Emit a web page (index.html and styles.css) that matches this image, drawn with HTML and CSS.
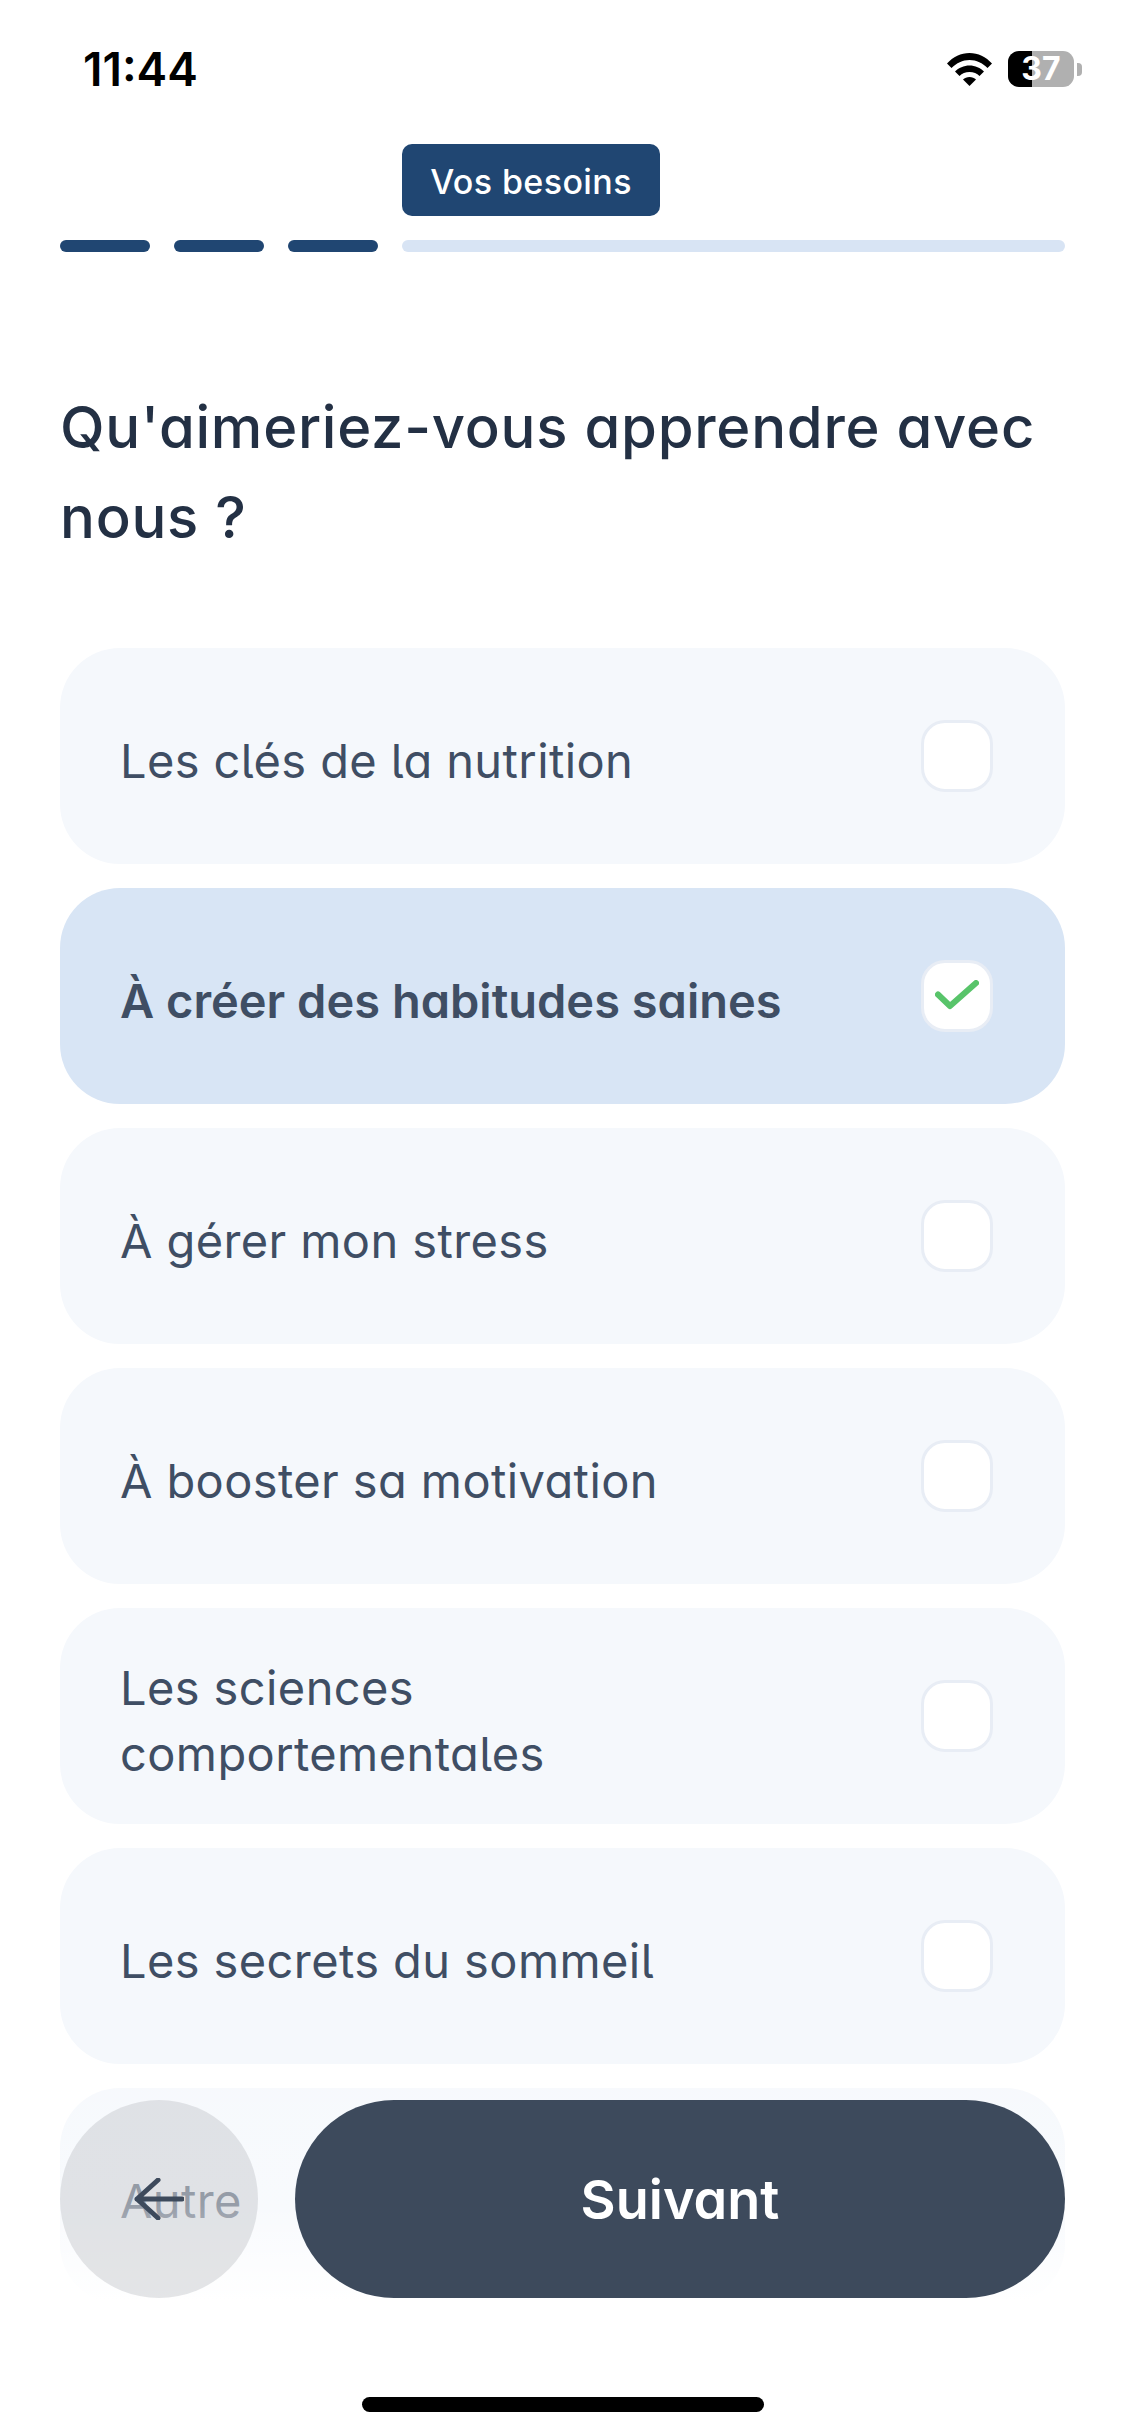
FILE: index.html
```html
<!DOCTYPE html>
<html lang="fr">
<head>
<meta charset="utf-8">
<title>Vos besoins</title>
<link rel="stylesheet" href="styles.css">
</head>
<body>
<main class="screen">
  <header class="status">
    <span class="time">11:44</span>
    <div class="status-icons">
      <svg class="wifi" viewBox="0 0 45 33" aria-hidden="true">
        <path d="M0 10.500C6 4 14 0 22.500 0S39 4 45 10.500L40.500 15C35.500 10 29.500 7 22.500 7S9.500 10 4.500 15Z"/>
        <path d="M8 18.500C11.500 15 17 12.500 22.500 12.500S33.500 15 37 18.500L32.500 23C30 20.500 26.500 19 22.500 19S15 20.500 12.500 23Z"/>
        <path d="M16 26.500C17.500 25 20 24 22.500 24S27.500 25 29 26.500L22.500 33Z"/>
      </svg>
      <div class="battery">
        <div class="battery-body"><div class="battery-fill"></div><span class="battery-num">37</span></div>
        <div class="battery-nub"></div>
      </div>
    </div>
  </header>

  <section class="progress">
    <div class="tag-row"><span class="tag">Vos besoins</span></div>
    <div class="bars">
      <span class="bar done"></span>
      <span class="bar done"></span>
      <span class="bar done"></span>
      <span class="bar rest"></span>
    </div>
  </section>

  <h1 class="question">Qu'aimeriez-vous apprendre avec nous ?</h1>

  <ul class="options">
    <li class="option"><span class="label">Les clés de la nutrition</span><span class="box"></span></li>
    <li class="option selected"><span class="label">À créer des habitudes saines</span>
      <span class="box"><svg class="check" viewBox="0 0 44 32" aria-hidden="true"><path d="M3 14.500 15 26 41 3"/></svg></span></li>
    <li class="option"><span class="label">À gérer mon stress</span><span class="box"></span></li>
    <li class="option"><span class="label">À booster sa motivation</span><span class="box"></span></li>
    <li class="option"><span class="label narrow">Les sciences comportementales</span><span class="box"></span></li>
    <li class="option"><span class="label">Les secrets du sommeil</span><span class="box"></span></li>
    <li class="option"><span class="label">Autre</span><span class="box"></span></li>
  </ul>

  <div class="fade"></div>
  <nav class="actions">
    <button class="back" aria-label="Retour">
      <svg viewBox="0 0 50 42" aria-hidden="true"><path d="M48 21H3M24 2 3 21 24 40"/></svg>
    </button>
    <button class="next">Suivant</button>
  </nav>
  <div class="home"></div>
</main>
</body>
</html>
```
FILE: styles.css
```css
* { box-sizing: border-box; margin: 0; padding: 0; }
html, body { background: #fff; }
body { width: 1125px; height: 2436px; overflow: hidden; font-family: "Inter", "Liberation Sans", sans-serif; font-feature-settings: "cv05", "cv11"; }
.screen { position: relative; width: 1125px; height: 2436px; overflow: hidden; padding: 0 60px; }

.status { height: 144px; display: flex; justify-content: space-between; align-items: flex-start; margin: 0 -17px 0 23px; padding-top: 43px; }
.time { font: 600 46px/52px "Inter", sans-serif; color: #000; }
.status-icons { display: flex; align-items: center; gap: 16px; padding-top: 8px; }
.wifi { width: 45px; height: 33px; fill: #000; display: block; }
.battery { display: flex; align-items: center; gap: 3px; }
.battery-body { position: relative; width: 66px; height: 36px; border-radius: 11px; background: #b0b0b0; display: flex; align-items: center; justify-content: center; }
.battery-fill { position: absolute; left: 0; top: 0; bottom: 0; width: 24px; border-radius: 11px 0 0 11px; background: #000; }
.battery-num { position: relative; font: 700 32px/36px "Inter", sans-serif; color: #fff; }
.battery-nub { width: 5px; height: 13px; background: #b0b0b0; border-radius: 0 4px 4px 0; }

.tag-row { padding-left: 342px; height: 96px; }
.tag { display: inline-flex; align-items: center; justify-content: center; height: 72px; width: 258px; padding-top: 2px; background: #204672; color: #fff; border-radius: 10px; font-size: 34px; font-weight: 500; letter-spacing: 0.4px; white-space: nowrap; }
.bars { display: flex; gap: 24px; }
.bar { height: 12px; border-radius: 6px; }
.done { width: 90px; background: #204672; }
.rest { flex: 1; background: #d8e4f4; }

.question { margin-top: 128px; padding-top: 2px; height: 182px; font-size: 58px; line-height: 90px; font-weight: 500; letter-spacing: 0.75px; color: #233044; }

.options { list-style: none; margin-top: 86px; display: flex; flex-direction: column; gap: 24px; }
.option { flex: none; height: 216px; border-radius: 60px; background: #f5f8fc; padding: 0 72px 0 60px; display: flex; align-items: center; justify-content: space-between; }
.selected { background: #d8e5f5; }
.label { margin-top: 10px; font-size: 47px; line-height: 66px; color: #3f4e64; font-weight: 400; letter-spacing: 0.4px; }
.narrow { width: 560px; }
.selected .label { font-weight: 600; letter-spacing: 0; }
.box { flex: none; width: 72px; height: 72px; border: 3px solid #e8edf5; border-radius: 24px; background: #fff; display: flex; align-items: center; justify-content: center; }
.check { width: 44px; height: 32px; fill: none; stroke: #58c46a; stroke-width: 6px; stroke-linecap: round; stroke-linejoin: round; }

.fade { position: absolute; left: 0; right: 0; top: 2085px; height: 240px; background: linear-gradient(to bottom, rgba(255,255,255,.2), rgba(255,255,255,.3) 50%, #fff 90%); }
.actions { position: absolute; left: 60px; right: 60px; top: 2100px; display: flex; gap: 37px; }
.back { flex: none; width: 198px; height: 198px; border: 0; border-radius: 50%; background: rgba(190,193,198,.42); display: flex; align-items: center; justify-content: center; }
.back svg { width: 50px; height: 42px; fill: none; stroke: #3d4a5c; stroke-width: 5px; stroke-linecap: round; stroke-linejoin: round; }
.next { flex: 1; height: 198px; border: 0; border-radius: 99px; background: #3d4a5c; color: #fff; font: 600 54px "Inter", sans-serif; font-feature-settings: "cv05", "cv11"; }
.home { position: absolute; left: 362px; top: 2397px; width: 402px; height: 15px; border-radius: 8px; background: #000; }
```
